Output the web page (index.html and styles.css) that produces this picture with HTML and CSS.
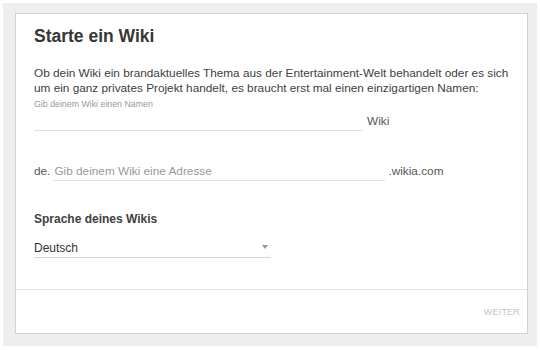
FILE: index.html
```html
<!DOCTYPE html>
<html lang="de">
<head>
<meta charset="utf-8">
<link rel="stylesheet" href="styles.css">
</head>
<body>
<div class="frame">
  <div class="card">
    <div class="content">
      <h1 class="title">Starte ein Wiki</h1>
      <p class="intro">Ob dein Wiki ein brandaktuelles Thema aus der Entertainment-Welt behandelt oder es sich um ein ganz privates Projekt handelt, es braucht erst mal einen einzigartigen Namen:</p>
      <div class="label">Gib deinem Wiki einen Namen</div>
      <div class="row row-name">
        <div class="field field-name"></div>
        <span class="suffix">Wiki</span>
      </div>
      <div class="row row-address">
        <span class="prefix">de.</span>
        <div class="field field-address"><span class="placeholder">Gib deinem Wiki eine Adresse</span></div>
        <span class="suffix suffix-address">.wikia.com</span>
      </div>
      <div class="section-label">Sprache deines Wikis</div>
      <div class="select">
        <span class="select-value">Deutsch</span>
        <span class="arrow"></span>
      </div>
    </div>
    <div class="footer">
      <span class="next">WEITER</span>
    </div>
  </div>
</div>
</body>
</html>
```

FILE: styles.css
```css
* { box-sizing: border-box; }
html, body { margin: 0; padding: 0; background: #fff; }
body {
  font-family: "Liberation Sans", Arial, sans-serif;
  width: 540px;
  height: 350px;
  padding: 3px;
}
.frame {
  background: repeating-conic-gradient(#e8e8e8 0 25%, #f5f5f5 0 50%) 0 0 / 2px 2px;
  width: 534px;
  height: 343px;
  padding: 10px 9px 12px 12px;
}
.card {
  background: #fff;
  border: 1px solid #d2d2d2;
  height: 321px;
  display: flex;
  flex-direction: column;
}
.content {
  flex: 1;
  padding: 10px 10px 0 18px;
  border-bottom: 1px solid #e4e4e4;
}
.title {
  margin: 0;
  font-size: 17.5px;
  font-weight: bold;
  color: #363636;
  line-height: 24px;
}
.intro {
  margin: 18px 0 0;
  font-size: 11.8px;
  line-height: 14.5px;
  color: #404040;
}
.label {
  margin-top: 4px;
  font-size: 8.8px;
  color: #999;
  line-height: 10px;
}
.row {
  display: flex;
  align-items: flex-end;
}
.row-name { margin-top: 1px; }
.field {
  border-bottom: 1px solid #e0e0e0;
  height: 21px;
}
.field-name { width: 329px; }
.suffix {
  font-size: 11.8px;
  color: #555;
  padding-left: 4px;
  line-height: 14px;
  margin-bottom: 3px;
}
.suffix-address { padding-left: 3px; }
.row-address { margin-top: 26px; }
.prefix {
  font-size: 11.8px;
  color: #555;
  line-height: 14px;
  margin-bottom: 3px;
  padding-right: 3px;
}
.field-address {
  width: 332px;
  height: 24px;
  display: flex;
  align-items: flex-end;
  padding-bottom: 2px;
  padding-left: 1px;
}
.placeholder {
  font-size: 11.8px;
  color: #999;
  line-height: 14px;
}
.section-label {
  margin-top: 31px;
  font-size: 12px;
  font-weight: bold;
  color: #404040;
  line-height: 14px;
}
.select {
  margin-top: 10px;
  width: 237px;
  height: 22px;
  border-bottom: 1px solid #d6d6d6;
  display: flex;
  justify-content: space-between;
  align-items: flex-end;
  padding: 0 3px 2px 0;
}
.select-value {
  font-size: 12px;
  line-height: 14px;
  color: #333;
}
.arrow {
  width: 0;
  height: 0;
  border-left: 3px solid transparent;
  border-right: 3px solid transparent;
  border-top: 4px solid #999;
  margin-bottom: 6px;
}
.footer {
  flex: 0 0 43px;
  display: flex;
  justify-content: flex-end;
  align-items: center;
  padding-right: 7px;
}
.next {
  font-size: 9px;
  color: #c4c4c4;
  letter-spacing: 0.2px;
}
```
